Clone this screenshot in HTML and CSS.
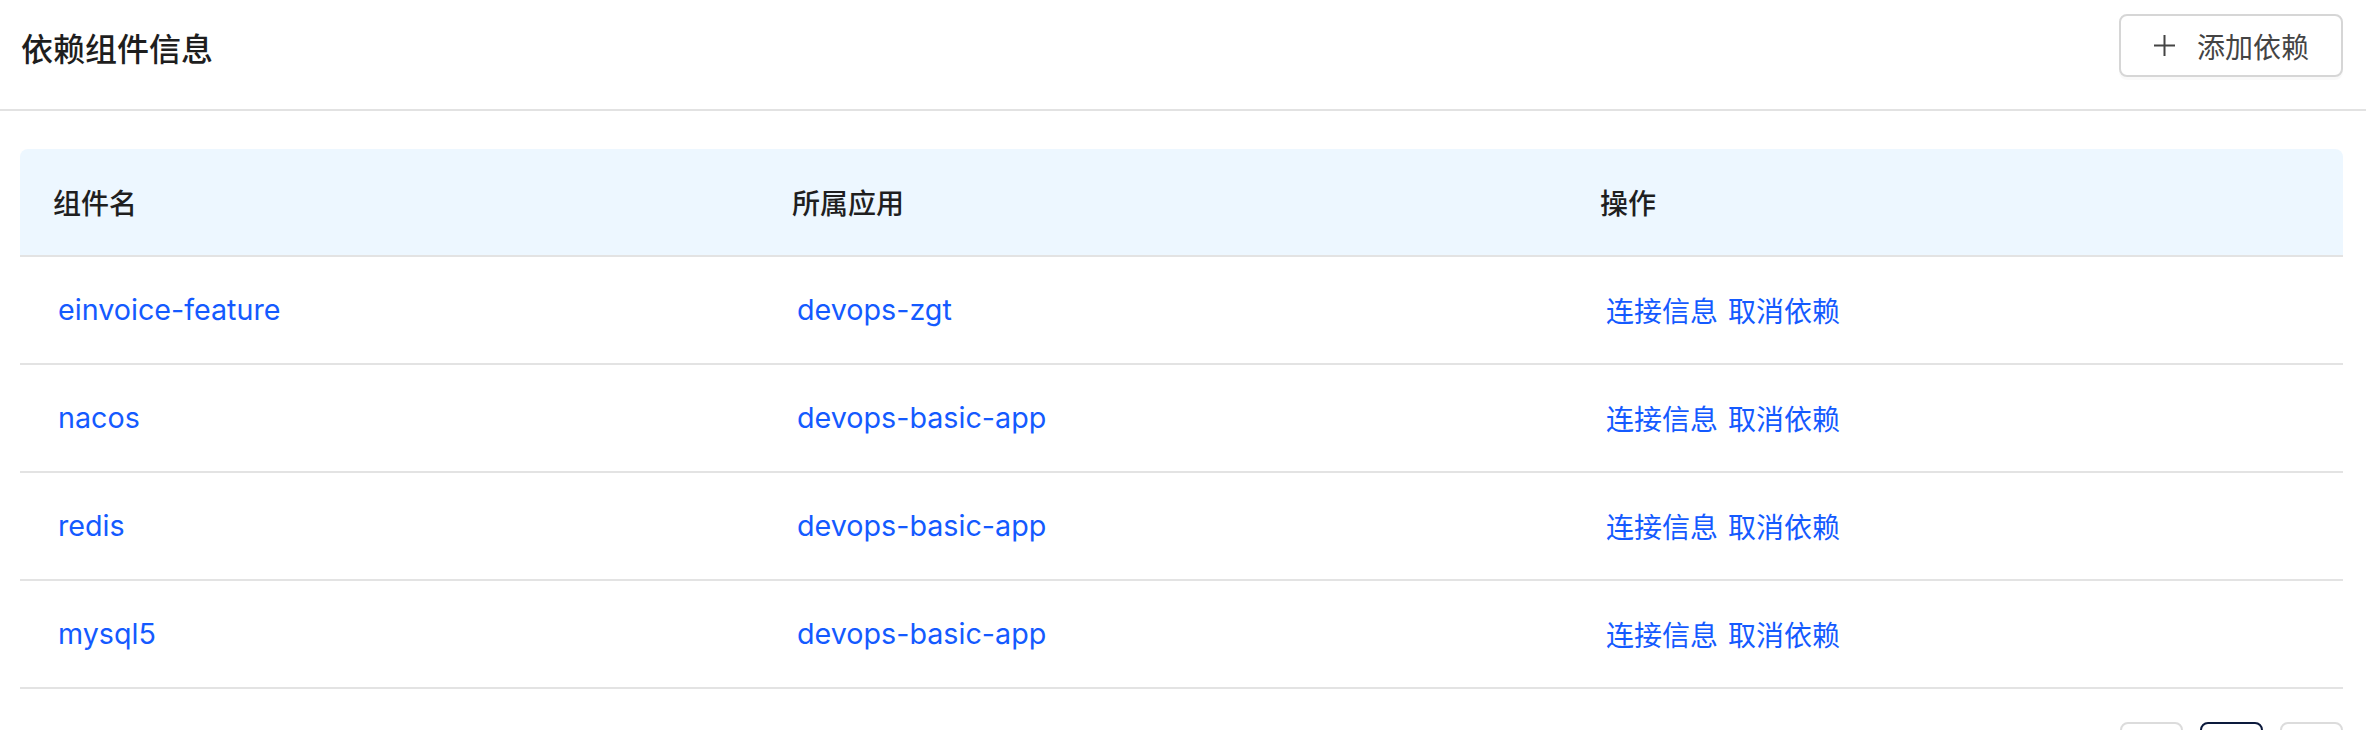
FILE: index.html
```html
<!DOCTYPE html>
<html lang="zh-CN">
<head>
<meta charset="utf-8">
<title>依赖组件信息</title>
<link rel="stylesheet" href="styles.css">
</head>
<body>
<div class="page">
  <header class="topbar">
    <h1 class="title">依赖组件信息</h1>
    <button class="add-btn" type="button">
      <svg class="plus" width="23" height="23" viewBox="0 0 23 23" aria-hidden="true">
        <path d="M11.5 1v21M1 11.5h21" stroke="#444" stroke-width="2" fill="none"/>
      </svg>
      <span>添加依赖</span>
    </button>
  </header>

  <main class="content">
    <div class="table">
      <div class="row head">
        <div class="cell">组件名</div>
        <div class="cell">所属应用</div>
        <div class="cell">操作</div>
      </div>
      <div class="row">
        <div class="cell link">einvoice-feature</div>
        <div class="cell link">devops-zgt</div>
        <div class="cell ops"><span class="link">连接信息</span><span class="link">取消依赖</span></div>
      </div>
      <div class="row">
        <div class="cell link">nacos</div>
        <div class="cell link">devops-basic-app</div>
        <div class="cell ops"><span class="link">连接信息</span><span class="link">取消依赖</span></div>
      </div>
      <div class="row">
        <div class="cell link">redis</div>
        <div class="cell link">devops-basic-app</div>
        <div class="cell ops"><span class="link">连接信息</span><span class="link">取消依赖</span></div>
      </div>
      <div class="row">
        <div class="cell link">mysql5</div>
        <div class="cell link">devops-basic-app</div>
        <div class="cell ops"><span class="link">连接信息</span><span class="link">取消依赖</span></div>
      </div>
    </div>

    <nav class="pager" aria-label="分页">
      <span class="pg" aria-label="上一页"></span>
      <span class="pg active" aria-label="第1页"></span>
      <span class="pg" aria-label="下一页"></span>
    </nav>
  </main>
</div>
</body>
</html>
```

FILE: styles.css
```css
html, body {
  margin: 0;
  padding: 0;
  overflow: hidden;
  background: #ffffff;
}

body {
  font-family: Inter, "Noto Sans CJK SC", "Liberation Sans", sans-serif;
  color: #1f1f1f;
}

.page {
  width: 2366px;
}

.topbar {
  height: 111px;
  box-sizing: border-box;
  display: flex;
  justify-content: space-between;
  align-items: flex-start;
  padding: 14px 23px 0 21px;
  border-bottom: 2px solid #e2e2e2;
}

.title {
  margin: 0;
  font-size: 32px;
  font-weight: 500;
  line-height: 66px;
  color: #1e1e1e;
  font-family: "Noto Sans CJK SC", sans-serif;
}

.add-btn {
  height: 63px;
  box-sizing: border-box;
  display: flex;
  align-items: center;
  gap: 21px;
  padding: 0 32px 0 32px;
  background: #ffffff;
  border: 2px solid #d6d6d6;
  border-radius: 8px;
  box-shadow: 0 3px 0 rgba(0, 0, 0, 0.025);
  font-family: "Noto Sans CJK SC", sans-serif;
  font-size: 28px;
  color: #444444;
  line-height: 1;
}

.plus {
  display: block;
}

.content {
  padding: 38px 23px 0 20px;
}

.table {
  display: flex;
  flex-direction: column;
}

.row {
  display: grid;
  grid-template-columns: 739px 808px 1fr;
  height: 108px;
  box-sizing: border-box;
  border-bottom: 2px solid #e3e3e3;
  align-items: center;
}

.row.head {
  background: #edf7ff;
  border-radius: 8px 8px 0 0;
}

.cell {
  padding-left: 38px;
  font-size: 28.7px;
  line-height: 40px;
}

.row.head .cell {
  padding-left: 33px;
  font-size: 28px;
  font-family: "Noto Sans CJK SC", sans-serif;
  font-weight: 500;
  color: #1f1f1f;
}

.link {
  color: #145aff;
}

.ops {
  display: flex;
  gap: 10px;
  font-size: 28px;
  font-family: "Noto Sans CJK SC", sans-serif;
  padding-left: 39px;
}

.pager {
  display: flex;
  justify-content: flex-end;
  gap: 17px;
  margin-top: 33px;
}

.pg {
  width: 63px;
  height: 63px;
  box-sizing: border-box;
  border: 2px solid #dcdcdc;
  border-radius: 8px;
}

.pg.active {
  border-color: #0c1a3c;
}
```
